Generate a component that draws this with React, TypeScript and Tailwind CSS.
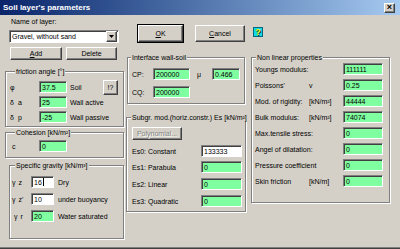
import type { ReactNode } from "react";

const raised =
  "border border-t-white border-l-white border-b-[#404040] border-r-[#404040] shadow-[inset_-1px_-1px_0_#808080] bg-[#d4d0c8]";
const sunken =
  "border border-t-[#808080] border-l-[#808080] border-b-white border-r-white shadow-[inset_1px_1px_0_#404040]";

function Group({
  title,
  titleLeft,
  className,
  children,
}: {
  title: string;
  titleLeft: string;
  className: string;
  children: ReactNode;
}) {
  return (
    <div
      className={`relative border border-[#808080] shadow-[inset_1px_1px_0_#fff,1px_1px_0_#fff] ${className}`}
    >
      <span
        className={`absolute -top-[5px] z-10 whitespace-nowrap bg-[#d4d0c8] px-[1px] ${titleLeft}`}
      >
        {title}
      </span>
      {children}
    </div>
  );
}

function Field({ value, className, white = false, caret = false }: { value: string; className: string; white?: boolean; caret?: boolean }) {
  return (
    <div
      className={`flex h-[12px] shrink-0 items-center pl-[2px] ${sunken} ${white ? "bg-white" : "bg-[#80ffa0]"} ${className}`}
    >
      {value}
      {caret && <span className="ml-[1px] h-[8px] w-[1px] bg-black" />}
    </div>
  );
}

function Row({ children }: { children: ReactNode }) {
  return <div className="flex h-[12px] items-center">{children}</div>;
}

export default function App() {
  return (
    <div className="h-[249px] w-[400px] overflow-hidden bg-[#d4d0c8] font-['Liberation_Sans',Arial,sans-serif] text-[7px] leading-[9px] text-black shadow-[inset_0_-1px_0_#404040,inset_0_-2px_0_#808080]">
      {/* title bar */}
      <div className="flex h-[15px] items-center bg-linear-to-r from-[#0a246a] to-[#a6caf0] pl-[3px]">
        <span className="text-[8px] font-bold text-white">Soil layer's parameters</span>
        <div className={`ml-auto mr-[5px] flex h-[10px] w-[11px] items-center justify-center text-[9px] font-bold leading-none ${raised}`}>
          ×
        </div>
      </div>

      <div className="flex">
        {/* left column */}
        <div className="ml-[5px] flex w-[119px] flex-col">
          <div className="mt-[2px] pl-[6px]">Name of layer:</div>
          <div className={`ml-[4px] mt-[4px] flex h-[13px] w-[110px] items-center bg-white pl-[2px] ${sunken}`}>
            <span>Gravel, without sand</span>
            <div className={`ml-auto mr-[1px] flex h-[11px] w-[11px] items-center justify-center ${raised}`}>
              <svg width="5" height="3" viewBox="0 0 5 3">
                <path d="M0 0h5L2.5 3z" fill="#000" />
              </svg>
            </div>
          </div>
          <div className="mt-[4px] flex h-[13px]">
            <div className={`ml-[5px] flex w-[52px] items-center justify-center ${raised}`}>
              <span><u>A</u>dd</span>
            </div>
            <div className={`ml-[4px] flex w-[51px] items-center justify-center ${raised}`}>Delete</div>
          </div>

          <Group title="friction angle [°]" titleLeft="left-[9px]" className="mt-[11px] h-[56px] w-[119px] pl-[4px] pr-[5px] pt-[9px]">
            <div className="flex flex-col gap-[3px]">
              <Row>
                <span className="w-[29px]">φ</span>
                <Field value="37.5" className="w-[28px]" />
                <span className="ml-[3px]">Soil</span>
                <div className={`ml-auto flex h-[15px] w-[15px] shrink-0 items-center justify-center ${raised}`}>!?</div>
              </Row>
              <Row>
                <span className="w-[29px]">δ<span className="ml-[4px]">a</span></span>
                <Field value="25" className="w-[28px]" />
                <span className="ml-[3px]">Wall active</span>
              </Row>
              <Row>
                <span className="w-[29px]">δ<span className="ml-[4px]">p</span></span>
                <Field value="-25" className="w-[28px]" />
                <span className="ml-[3px]">Wall passive</span>
              </Row>
            </div>
          </Group>

          <Group title="Cohesion [kN/m²]" titleLeft="left-[9px]" className="mt-[5px] h-[26px] w-[119px] pl-[6px] pt-[7px]">
            <Row>
              <span className="w-[27px]">c</span>
              <Field value="0" className="w-[28px]" />
            </Row>
          </Group>

          <Group title="Specific gravity [kN/m³]" titleLeft="left-[5px]" className="ml-[4px] mt-[7px] h-[74px] w-[115px] pl-[2px] pt-[10px]">
            <div className="flex flex-col gap-[5px]">
              <Row>
                <span className="w-[19px]">γ<span className="ml-[3px]">z</span></span>
                <Field value="16" white caret className="w-[23px]" />
                <span className="ml-[4px]">Dry</span>
              </Row>
              <Row>
                <span className="w-[19px]">γ<span className="ml-[3px]">z'</span></span>
                <Field value="10" white className="w-[23px]" />
                <span className="ml-[4px]">under buoyancy</span>
              </Row>
              <Row>
                <span className="w-[19px] pl-[2px]">γ<span className="ml-[3px]">r</span></span>
                <Field value="20" className="w-[23px]" />
                <span className="ml-[4px]">Water saturated</span>
              </Row>
            </div>
          </Group>
        </div>

        {/* right part */}
        <div className="flex flex-col">
          <div className="mt-[10px] flex h-[17px]">
            <div className={`ml-[14px] flex w-[45px] items-center justify-center outline outline-1 outline-black ${raised}`}>
              <span><u>O</u>K</span>
            </div>
            <div className={`ml-[12px] flex w-[50px] items-center justify-center ${raised}`}>
              <span><u>C</u>ancel</span>
            </div>
            <div className="ml-[8px] mt-[2px] flex h-[10px] w-[10px] items-center justify-center border border-[#006878] bg-[#10d8e8] text-[9px] font-bold leading-none text-[#f0f000] [text-shadow:1px_1px_0_#203020]">
              ?
            </div>
          </div>

          <div className="flex">
            {/* middle column */}
            <div className="ml-[2px] flex w-[120px] flex-col">
              <Group title="Interface wall-soil" titleLeft="left-[3px]" className="ml-[1px] mt-[15px] h-[47px] w-[118px] pl-[4px] pt-[10px]">
                <div className="flex flex-col gap-[6px]">
                  <Row>
                    <span className="w-[21px]">CP:</span>
                    <Field value="200000" className="w-[37px]" />
                    <span className="ml-[7px] w-[15px]">μ</span>
                    <Field value="0.466" className="w-[28px]" />
                  </Row>
                  <Row>
                    <span className="w-[21px]">CQ:</span>
                    <Field value="200000" className="w-[37px]" />
                  </Row>
                </div>
              </Group>

              <Group title="Subgr. mod.(horiz.constr.) Es [kN/m²]" titleLeft="left-[4px]" className="mt-[13px] h-[95px] w-[120px] pl-[5px] pt-[9px]">
                <div className={`flex h-[13px] w-[50px] items-center justify-center text-[#808080] [text-shadow:1px_1px_0_#fff] ${raised}`}>
                  Polynomial...
                </div>
                <div className="mt-[5px] flex flex-col">
                  <Row>
                    <span className="w-[69px]">Es0: Constant</span>
                    <Field value="133333" white className="w-[41px]" />
                  </Row>
                  <div className="mt-[4px]">
                    <Row>
                      <span className="w-[69px]">Es1: Parabula</span>
                      <Field value="0" className="w-[41px]" />
                    </Row>
                  </div>
                  <div className="mt-[5px]">
                    <Row>
                      <span className="w-[69px]">Es2: Linear</span>
                      <Field value="0" className="w-[41px]" />
                    </Row>
                  </div>
                  <div className="mt-[5px]">
                    <Row>
                      <span className="w-[69px]">Es3: Quadratic</span>
                      <Field value="0" className="w-[41px]" />
                    </Row>
                  </div>
                </div>
              </Group>
            </div>

            {/* right column */}
            <Group title="Non linear properties" titleLeft="left-[4px]" className="ml-[5px] mt-[15px] h-[146px] w-[139px] pl-[3px] pr-[6px] pt-[5px]">
              <div className="flex flex-col gap-[4px]">
                {[
                  ["Youngs modulus:", "", "111111"],
                  ["Poissons'", "v", "0.25"],
                  ["Mod. of rigidity:", "[kN/m²]", "44444"],
                  ["Bulk modulus:", "[kN/m²]", "74074"],
                  ["Max.tensile stress:", "", "0"],
                  ["Angel of dilatation:", "", "0"],
                  ["Pressure coefficient", "", "0"],
                  ["Skin friction", "[kN/m]", "0"],
                ].map(([label, unit, value]) => (
                  <Row key={label}>
                    <span className="w-[54px] whitespace-nowrap">{label}</span>
                    <span>{unit}</span>
                    <Field value={value} className="ml-auto w-[40px]" />
                  </Row>
                ))}
              </div>
            </Group>
          </div>
        </div>
      </div>
    </div>
  );
}
